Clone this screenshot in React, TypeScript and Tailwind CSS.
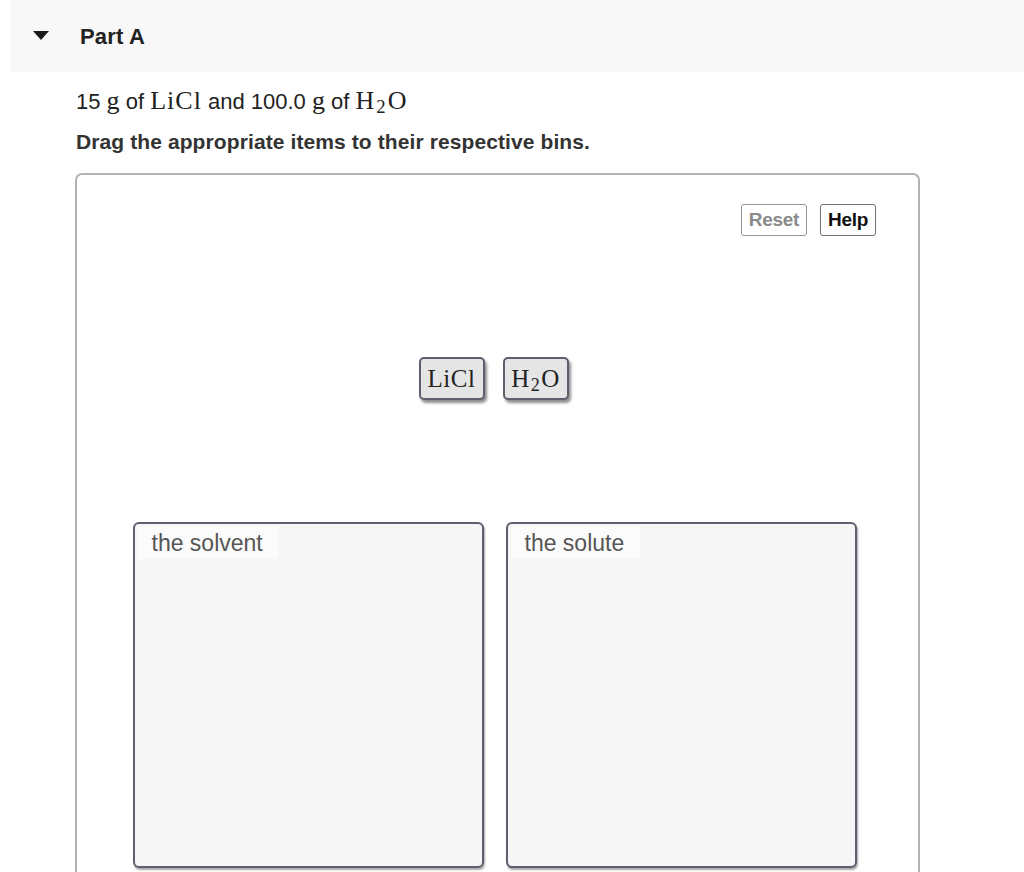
import React from "react";

const sans = "font-['Liberation_Sans',Arial,sans-serif]";
const serif = "font-['Liberation_Serif','DejaVu_Serif',serif]";

function H2O() {
  return (
    <span className={serif}>
      H<span className="relative top-[0.22em] mx-[1px] text-[0.72em]">2</span>O
    </span>
  );
}

function Token({ children }: { children: React.ReactNode }) {
  return (
    <div
      className={`${serif} flex h-[43px] w-[66px] items-center justify-center rounded-[5px] border-2 border-[#5c5f6d] bg-[#e5e5e5] text-[25px] tracking-[0.5px] text-[#222] shadow-[2px_3px_3px_rgba(0,0,0,0.45)]`}
    >
      {children}
    </div>
  );
}

function Bin({ label }: { label: string }) {
  return (
    <div className="h-[346px] w-[351px] rounded-[6px] border-2 border-[#5e6070] bg-[#f6f6f6] p-[3px] shadow-[1px_2px_2px_rgba(0,0,0,0.35)]">
      <div className="inline-block bg-[#fbfbfb] pl-[14px] pr-[16px] pt-[5px] pb-[4px] text-[23px] leading-[23px] text-[#555]">
        {label}
      </div>
    </div>
  );
}

export default function App() {
  return (
    <div className={`${sans} min-h-[872px] bg-white text-[#222]`}>
      <div className="ml-[10px] flex h-[72px] items-center bg-[#f8f8f8]">
        <svg width="16" height="10" viewBox="0 0 16 10" className="ml-[23px]">
          <path d="M0 0 L16 0 L8 9 Z" fill="#1a1a1a" />
        </svg>
        <span className="ml-[31px] text-[22px] font-bold tracking-[0.2px] text-[#222]">Part A</span>
      </div>

      <div className="px-[75px]">
        <p className="mt-[13px] pl-[1px] text-[22px] leading-[30px] text-[#222]">
          15 <span className={`${serif} text-[26px]`}>g</span> of{" "}
          <span className={`${serif} text-[26px] tracking-[1px]`}>LiCl</span> and 100.0{" "}
          <span className={`${serif} text-[26px]`}>g</span> of{" "}
          <span className="text-[26px] tracking-[1px]">
            <H2O />
          </span>
        </p>
        <p className="mt-[12px] pl-[1px] text-[21px] font-bold leading-[24px] tracking-[0.1px] text-[#333]">
          Drag the appropriate items to their respective bins.
        </p>

        <div className="mt-[19px] h-[720px] w-[845px] rounded-[7px] border-2 border-b-0 border-[#b3b3b3] bg-white">
          <div className="mr-[42px] mt-[29px] flex justify-end gap-[13px]">
            <button className="h-[32px] rounded-[3px] border border-[#8c969b] bg-white px-[7px] text-[19px] font-bold tracking-[-0.3px] text-[#8a8a8a]">
              Reset
            </button>
            <button className="h-[32px] rounded-[3px] border border-[#6b7278] bg-white px-[7px] text-[19px] font-bold tracking-[-0.3px] text-[#111]">
              Help
            </button>
          </div>

          <div className="mt-[121px] flex justify-center gap-[18px] pr-[8px]">
            <Token>LiCl</Token>
            <Token>
              <H2O />
            </Token>
          </div>

          <div className="mt-[122px] flex justify-center gap-[22px] pr-[6px]">
            <Bin label="the solvent" />
            <Bin label="the solute" />
          </div>
        </div>
      </div>
    </div>
  );
}
